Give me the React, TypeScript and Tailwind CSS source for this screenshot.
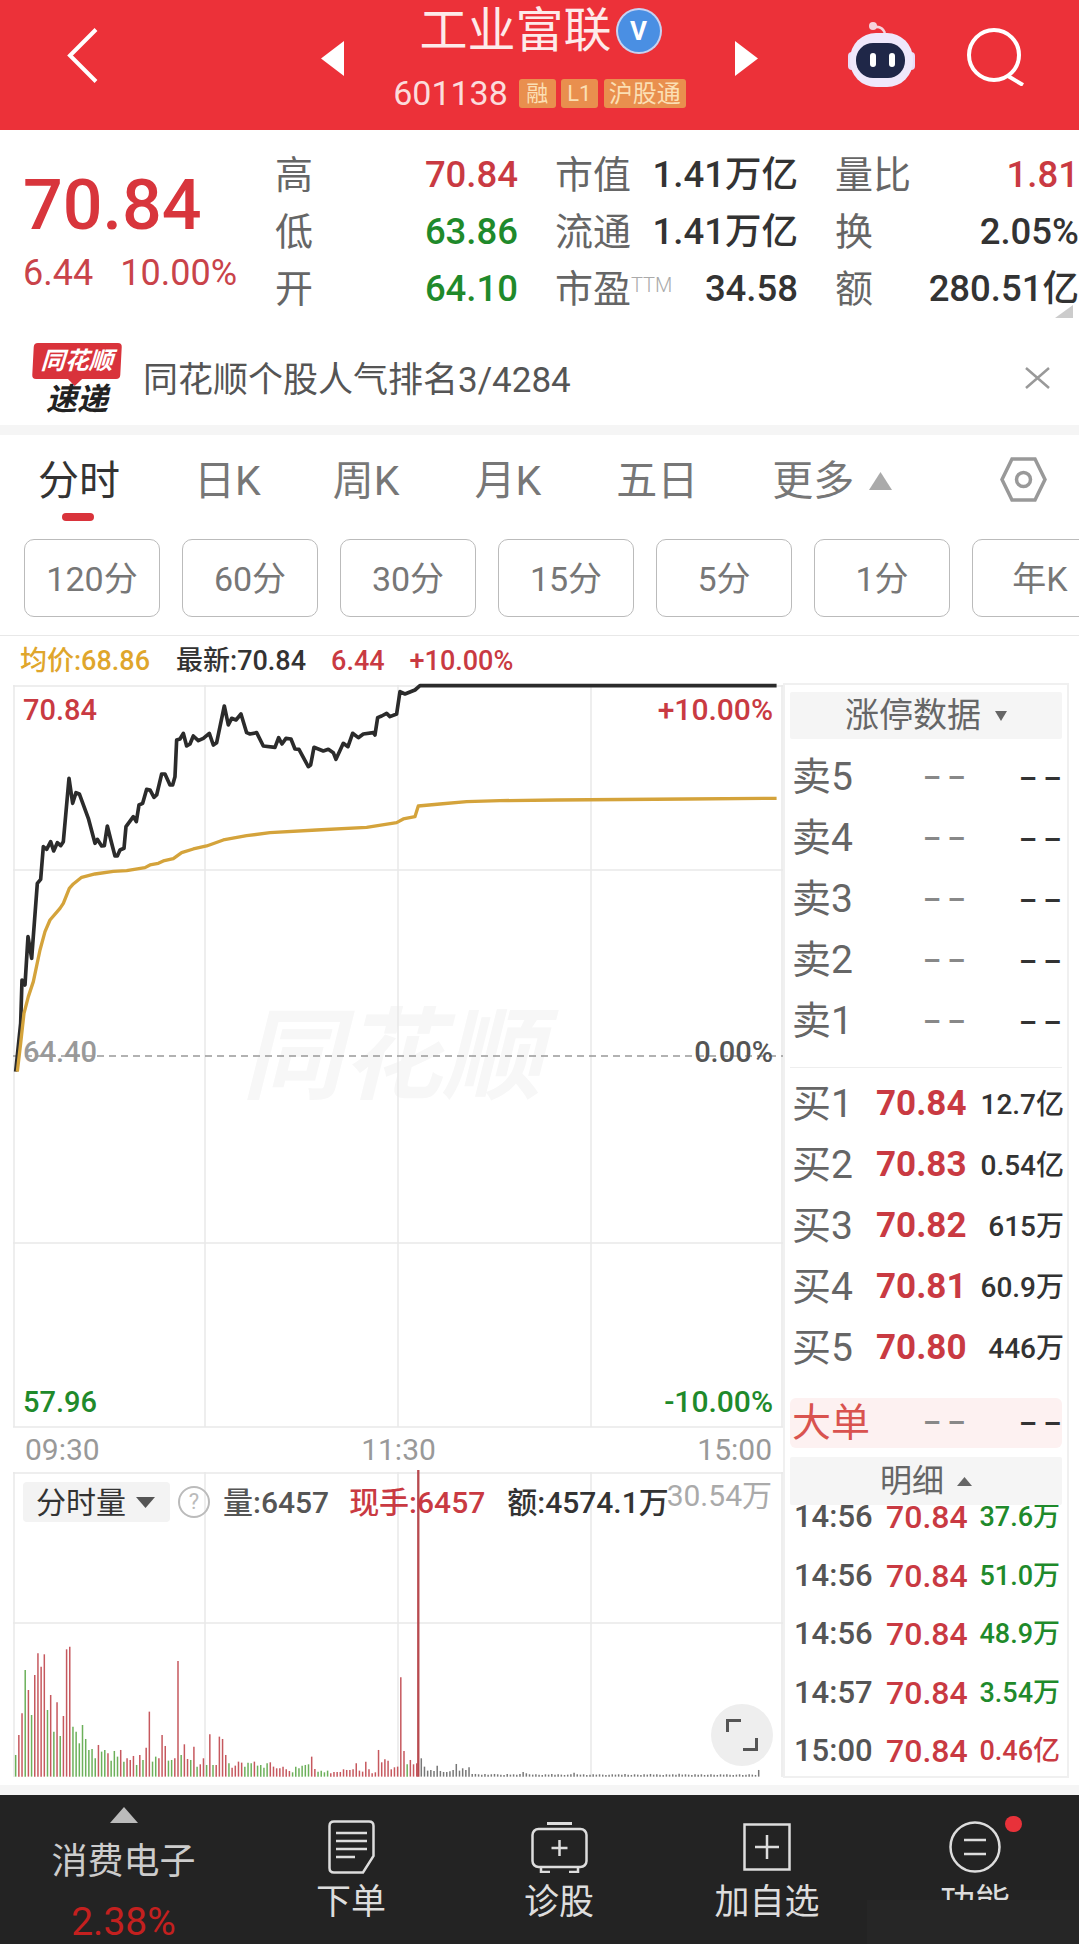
import type { ReactNode } from "react";

const RED = "text-[#c93a42]";

// positive = red bar, negative = green bar; value is the bar top in a 3x crop of the volume chart
const volTops = [
  -1005, 945, 880, -750, 810, -885, 765, 700, 740, 703, -870, 825, -935, 847, -948, 888, 688, 680, -920, -935, -970,
  -915, -957, -990, -987, -1015, 975, -995, -990, 1000, -1022, -993, -1010, 990, -1025, 1015, 1020, 1008, -1035, 1005,
  -1020, 983, 875, -1025, -1010, 1015, 945, 978, -1022, -1020, 1015, 723, -1005, 973, 1017, -1020, 980, -1040, 1033,
  1015, -1035, 943, -1035, 1035, 950, 957, 1005, -1030, 1043, 1037, 1025, 1028, -1040, -1028, -1030, 1025, -1037,
  -1035, -1043, -1030, 1027, 1040, 1045, 1045, 1040, 1048, 1053, -1057, -1040, -1045, -1037, -1035, -1033, 1010, 1047,
  -1055, -1052, -1057, -1052, 1060, 1056, 1056, 1056, 1048, 1050, 1050, 1048, 1030, 1052, 1055, 1025, 1048, 1060, 1057,
  990, 1027, 1018, 1022, 1048, 1042, 1040, 772, 993, -1033, 1020, 1033, 1030,
];
const grayTops = [
  1015, 1040, 1052, 1050, 1053, 1037, 1053, 1056, 1056, 1054, 1050, 1032, 1052, 1045, 1050, 1042, 1062, 1062, 1063,
  1064, 1062, 1064, 1063, 1062, 1063, 1064, 1065, 1062, 1064, 1063, 1064, 1062, 1056, 1060, 1063, 1064, 1063, 1064,
  1065, 1063, 1064, 1062, 1064, 1063, 1064, 1065, 1064, 1063, 1058, 1063, 1064, 1063, 1065, 1064, 1063, 1064, 1063,
  1064, 1065, 1064, 1063, 1064, 1063, 1064, 1062, 1064, 1065, 1063, 1064, 1065, 1063, 1064, 1062, 1064, 1063, 1064,
  1065, 1063, 1064, 1063, 1064, 1061, 1064, 1063, 1064, 1065, 1063, 1064, 1063, 1065, 1064, 1063, 1064, 1065, 1063,
  1064, 1063, 1064, 1065, 1064, 1063, 1065, 1064, 1063, 1064, 1065, 1050,
];

const priceLine =
  "M47 1205L62 1060L66 930L75 945L84 800L95 865L112 640L122 628L130 530L140 538L152 515L161 543L172 518L182 527L190 515L207 325L218 400L228 368L238 372L265 445L285 520L292 508L305 528L313 527L322 468L335 520L345 558L352 558L360 540L372 535L378 470L400 440L409 455L417 405L428 400L440 358L450 360L462 382L470 375L485 312L495 312L510 345L518 345L525 320L530 210L540 207L550 190L560 228L570 222L580 198L595 212L610 205L628 190L640 225L650 218L673 108L685 165L695 145L708 150L723 132L740 188L750 192L770 188L790 228L825 232L836 203L846 222L858 205L873 207L885 237L897 238L925 290L932 285L942 232L970 243L985 238L1000 248L1008 268L1030 220L1044 230L1058 190L1075 203L1090 192L1120 188L1125 195L1133 143L1145 138L1160 130L1170 140L1190 132L1200 65L1215 72L1245 60L1260 47L2330 47";
const avgLine =
  "M52 1205L62 1120L72 1030L85 980L100 935L120 840L135 785L150 750L180 715L190 700L208 655L220 642L245 622L285 612L340 604L380 602L435 593L450 585L475 580L490 573L520 566L545 548L580 537L620 528L670 510L740 497L810 488L950 480L1100 472L1190 458L1210 447L1245 440L1255 408L1320 402L1400 395L1500 392L1670 390L2060 387L2330 385";

function Caret({ up, className }: { up?: boolean; className: string }) {
  return (
    <svg viewBox="0 0 20 14" preserveAspectRatio="none" className={className}>
      <polygon points={up ? "10,0 20,14 0,14" : "0,0 20,0 10,14"} fill="currentColor" />
    </svg>
  );
}

function Dash({ dark }: { dark?: boolean }) {
  return (
    <span className={`relative top-[1px] text-[28px] font-bold leading-none ${dark ? "text-[#333]" : "text-[#888]"}`}>
      – –
    </span>
  );
}

function StatCell({ label, value, tone = "text-[#333]" }: { label: ReactNode; value: string; tone?: string }) {
  return (
    <div className="flex h-[57px] items-center justify-between whitespace-nowrap">
      <span className="text-[38px] text-[#666]">{label}</span>
      <span className={`text-[36.5px] font-medium ${tone}`}>{value}</span>
    </div>
  );
}

function SellRow({ label }: { label: string }) {
  return (
    <div className="flex h-[61px] items-center pl-[7px]">
      <span className="w-[131px] text-[39px] text-[#666]">{label}</span>
      <span className="w-[96px]">
        <Dash />
      </span>
      <Dash dark />
    </div>
  );
}

function BuyRow({ label, price, vol }: { label: string; price: string; vol: string }) {
  return (
    <div className="flex h-[61px] items-center pl-[7px] pr-[3px] whitespace-nowrap">
      <span className="w-[84px] text-[39px] text-[#666]">{label}</span>
      <span className={`text-[35px] font-bold ${RED}`}>{price}</span>
      <span className="ml-auto text-[28px] font-medium text-[#333]">{vol}</span>
    </div>
  );
}

function TickRow({ time, vol, tone }: { time: string; vol: string; tone: string }) {
  return (
    <div className="flex h-[58.5px] shrink-0 items-center pl-[9px] pr-[7px] whitespace-nowrap">
      <span className="w-[92px] text-[31px] font-medium text-[#555]">{time}</span>
      <span className={`text-[32px] font-medium ${RED}`}>70.84</span>
      <span className={`ml-auto text-[27px] font-medium ${tone}`}>{vol}</span>
    </div>
  );
}

function NavItem({ icon, label }: { icon: ReactNode; label: string }) {
  return (
    <div className="flex w-[208px] flex-col items-center pt-[24px]">
      <div className="flex h-[56px] items-center justify-center">{icon}</div>
      <div className="mt-[8px] flex h-[40px] items-center text-[35px] text-[#ddd]">{label}</div>
    </div>
  );
}

function PriceChart() {
  return (
    <div className="relative h-[742px] w-[770px]">
      <span className="absolute left-[229px] top-[322px] text-[100px] font-bold italic leading-none text-[#f7f7f7]">
        同花顺
      </span>
      <svg viewBox="13 685 770 742" className="absolute inset-0 h-full w-full overflow-visible">
        <g stroke="#e9e9e9" strokeWidth="1.5" fill="none">
          <path d="M14 685V1427M205 685V1427M398 685V1427M591 685V1427M782 685V1427" />
          <path d="M13 686H783M13 870H783M13 1243H783M13 1427H783" />
        </g>
        <path d="M13 1056H783" stroke="#999" strokeWidth="1.5" strokeDasharray="7 5" />
        <g transform="translate(0 670) scale(0.3333)" fill="none" strokeLinejoin="round">
          <path d={priceLine} stroke="#2b2b2b" strokeWidth="11" />
          <path d={avgLine} stroke="#d4a33b" strokeWidth="10" />
        </g>
      </svg>
      <span className={`absolute left-[10px] top-[10px] text-[29px] font-medium leading-[30px] ${RED}`}>70.84</span>
      <span className={`absolute right-[10px] top-[10px] text-[30px] font-medium leading-[30px] ${RED}`}>+10.00%</span>
      <span className="absolute left-[10px] top-[352px] text-[29px] font-medium leading-[30px] text-[#999]">64.40</span>
      <span className="absolute right-[10px] top-[352px] text-[29px] font-medium leading-[30px] text-[#555]">0.00%</span>
      <span className="absolute left-[10px] top-[702px] text-[29px] font-medium leading-[30px] text-[#1f8a2b]">57.96</span>
      <span className="absolute right-[10px] top-[702px] text-[30px] font-medium leading-[30px] text-[#1f8a2b]">-10.00%</span>
    </div>
  );
}

function VolumeChart() {
  return (
    <div className="relative h-[305px] w-[770px]">
      <svg viewBox="13 1472 770 305" className="absolute inset-0 h-full w-full overflow-visible">
        <g stroke="#e9e9e9" strokeWidth="1.5" fill="none">
          <path d="M14 1472V1777M205 1472V1777M398 1472V1777M591 1472V1777M782 1472V1777" />
          <path d="M13 1473H783M13 1623H783" />
        </g>
        <g transform="translate(0 1420) scale(0.3333)" strokeWidth="4.5">
          {volTops.map((top, i) => (
            <line
              key={i}
              x1={47 + i * 9.55}
              x2={47 + i * 9.55}
              y1={1070}
              y2={Math.abs(top)}
              stroke={top < 0 ? "#6cb05a" : "#c6585e"}
            />
          ))}
          {grayTops.map((top, i) => (
            <line key={i} x1={1264 + i * 9.55} x2={1264 + i * 9.55} y1={1070} y2={top} stroke="#777" />
          ))}
          <line x1={1255} x2={1255} y1={1070} y2={150} stroke="#b84a4f" strokeWidth="7" />
        </g>
      </svg>

      <div className="absolute left-[10px] top-[10px] flex h-[40px] items-center whitespace-nowrap">
        <div className="flex h-[40px] w-[147px] items-center rounded-[4px] bg-[#f3f3f3] pl-[13px] text-[30px] text-[#333]">
          分时量
          <Caret className="ml-[10px] h-[11px] w-[19px] text-[#555]" />
        </div>
        <div className="ml-[8px] flex h-[32px] w-[32px] items-center justify-center rounded-full border-2 border-[#bbb] text-[22px] leading-none text-[#bbb]">
          ?
        </div>
        <span className="ml-[13px] text-[30px] font-medium text-[#555]">量:6457</span>
        <span className={`ml-[20px] text-[30px] font-medium ${RED}`}>现手:6457</span>
        <span className="ml-[22px] text-[30px] font-medium text-[#333]">额:4574.1万</span>
      </div>
      <span className="absolute right-[11px] top-[4px] text-[30px] leading-[40px] text-[#aaa]">30.54万</span>

      <div className="absolute bottom-[11px] left-[698px] flex h-[62px] w-[62px] items-center justify-center rounded-full bg-[#eee]">
        <svg viewBox="0 0 32 32" className="h-[32px] w-[32px]" fill="none" stroke="#555" strokeWidth="3">
          <path d="M1.5 13V1.5H15M30.5 19V30.5H17" />
        </svg>
      </div>
    </div>
  );
}

export default function App() {
  return (
    <div className="relative h-[1944px] w-[1079px] overflow-hidden bg-white [font-family:Roboto,'Noto_Sans_CJK_SC',sans-serif]">
      {/* top bar */}
      <header className="flex h-[130px] items-start bg-[#ec3139] text-white">
        <svg viewBox="0 0 31 55" className="ml-[67px] mt-[28px] h-[55px] w-[31px]" fill="none" stroke="#fff" strokeWidth="4">
          <path d="M29 1.5L3 27.5L29 53.5" />
        </svg>
        <svg viewBox="0 0 23 35" className="ml-[223px] mt-[41px] h-[35px] w-[23px]">
          <polygon points="23,0 23,35 0,17.5" fill="#fff" />
        </svg>
        <div className="flex w-[391px] flex-col items-center">
          <div className="mt-[6px] flex h-[50px] items-center">
            <span className="text-[48px] leading-none text-[#fdeaea]">工业富联</span>
            <span className="ml-[6px] flex h-[42px] w-[42px] items-center justify-center rounded-full bg-[#4a8fe3] text-[26px] font-bold leading-none text-white ring-2 ring-[#c7d2f2]">
              V
            </span>
          </div>
          <div className="mt-[23px] flex h-[29px] items-center">
            <span className="text-[34px] text-[#fbdcdc]">601138</span>
            <span className="ml-[11px] flex h-[29px] w-[37px] items-center justify-center rounded-[3px] bg-[#e98f4e] text-[22px] text-[#fbdfb4]">融</span>
            <span className="ml-[5px] flex h-[29px] w-[37px] items-center justify-center rounded-[3px] bg-[#e98f4e] text-[22px] text-[#fbdfb4]">L1</span>
            <span className="ml-[6px] flex h-[29px] w-[82px] items-center justify-center rounded-[3px] bg-[#e98f4e] text-[24px] text-[#fbdfb4]">沪股通</span>
          </div>
        </div>
        <svg viewBox="0 0 23 35" className="mt-[41px] h-[35px] w-[23px]">
          <polygon points="0,0 0,35 23,17.5" fill="#fff" />
        </svg>
        <svg viewBox="0 0 71 66" className="ml-[90px] mt-[22px] h-[66px] w-[71px]">
          <circle cx="25" cy="4" r="4" fill="#f6d3dc" />
          <path d="M27 5Q34 4 37 11" fill="none" stroke="#f6d3dc" strokeWidth="2.5" />
          <rect x="0" y="30" width="8" height="18" rx="4" fill="#e9dcf7" />
          <rect x="59" y="30" width="8" height="18" rx="4" fill="#e9dcf7" />
          <rect x="2" y="11" width="63" height="54" rx="26" fill="#efe8fb" />
          <rect x="8" y="21" width="49" height="35" rx="17" fill="#1f2748" />
          <rect x="22" y="31" width="6" height="14" rx="3" fill="#fff" />
          <rect x="41" y="31" width="6" height="14" rx="3" fill="#fff" />
        </svg>
        <svg viewBox="0 0 58 58" className="ml-[48px] mt-[28px] h-[58px] w-[58px]" fill="none" stroke="#fff" strokeWidth="4">
          <circle cx="27" cy="27" r="25" />
          <path d="M41 48L56 57" />
        </svg>
      </header>

      {/* quote summary */}
      <section className="flex h-[201px]">
        <div className="w-[278px] pl-[23px] pt-[33px]">
          <div className="text-[70px] font-medium leading-[84px] text-[#d8353c]">70.84</div>
          <div className="mt-[6px] flex gap-[27px] text-[36px] leading-[40px] text-[#c9434a]">
            <span>6.44</span>
            <span>10.00%</span>
          </div>
        </div>
        <div className="mt-[17px] grid h-[171px] grid-cols-[243px_243px_244px] gap-x-[37px]">
          <StatCell label="高" value="70.84" tone={RED} />
          <StatCell label="市值" value="1.41万亿" />
          <StatCell label="量比" value="1.81" tone={RED} />
          <StatCell label="低" value="63.86" tone="text-[#1f8a2b]" />
          <StatCell label="流通" value="1.41万亿" />
          <StatCell label="换" value="2.05%" />
          <StatCell label="开" value="64.10" tone="text-[#1f8a2b]" />
          <StatCell
            label={
              <>
                市盈<sup className="text-[20px] font-light text-[#aaa]">TTM</sup>
              </>
            }
            value="34.58"
          />
          <StatCell label="额" value="280.51亿" />
        </div>
      </section>
      <svg viewBox="0 0 18 13" className="absolute left-[1055px] top-[305px] h-[13px] w-[18px]">
        <polygon points="18,0 18,13 0,13" fill="#ccc" />
      </svg>

      {/* news strip */}
      <section className="flex h-[94px] items-center">
        <div className="ml-[33px] flex w-[88px] flex-col items-center">
          <div className="relative mt-[2px] flex h-[36px] w-[88px] -skew-x-3 items-center justify-center rounded-[4px] bg-[#d9333b] text-[24px] font-bold italic leading-none text-white">
            同花顺
            <span className="absolute -bottom-[5px] left-[38px] h-[10px] w-[10px] rotate-45 bg-[#d9333b]" />
          </div>
          <div className="mt-[5px] text-[31px] font-bold italic leading-[32px] text-[#222]">速递</div>
        </div>
        <span className="relative top-[2px] ml-[22px] text-[35px] leading-none text-[#555]">同花顺个股人气排名3/4284</span>
        <svg viewBox="0 0 25 22" className="ml-auto mr-[29px] h-[22px] w-[25px]" fill="none" stroke="#999" strokeWidth="2.5">
          <path d="M1 1L24 21M24 1L1 21" />
        </svg>
      </section>
      <div className="h-[10px] bg-[#f5f5f5]" />

      {/* period tabs */}
      <nav className="relative flex h-[90px] items-center gap-[75px] pl-[38px] pt-[2px] text-[41px] leading-none text-[#777]">
        <span className="text-[#333]">分时</span>
        <span className="-ml-[1px]">日K</span>
        <span className="-ml-[3px]">周K</span>
        <span>月K</span>
        <span>五日</span>
        <span className="-ml-[1px] flex items-center">
          更多
          <Caret up className="ml-[15px] h-[18px] w-[23px] text-[#aaa]" />
        </span>
        <svg viewBox="0 0 47 45" className="absolute left-[1000px] top-[22px] h-[45px] w-[47px]" fill="none" stroke="#999" strokeWidth="3.5">
          <polygon points="12,2 35,2 45,22.5 35,43 12,43 2,22.5" />
          <circle cx="23.5" cy="22.5" r="7" />
        </svg>
        <span className="absolute bottom-[4px] left-[62px] h-[8px] w-[32px] rounded-full bg-[#d9333b]" />
      </nav>

      <div className="mt-[14px] flex gap-[22px] pl-[24px]">
        {["120分", "60分", "30分", "15分", "5分", "1分", "年K"].map((label) => (
          <div
            key={label}
            className="flex h-[78px] w-[136px] shrink-0 items-center justify-center rounded-[10px] border border-[#bbb] pt-[2px] text-[34px] text-[#777]"
          >
            {label}
          </div>
        ))}
      </div>
      <div className="mt-[18px] h-[1px] bg-[#e8e8e8]" />

      {/* chart legend */}
      <div className="flex h-[47px] items-center whitespace-nowrap pl-[20px] pt-[4px] text-[27px] font-medium">
        <span className="text-[#dfa62c]">均价:68.86</span>
        <span className="ml-[26px] text-[#333]">最新:70.84</span>
        <span className={`ml-[25px] ${RED}`}>6.44</span>
        <span className={`ml-[25px] ${RED}`}>+10.00%</span>
      </div>

      {/* chart and order book */}
      <div className="flex pl-[13px]">
        <div className="mt-[2px] w-[770px]">
          <PriceChart />
          <div className="flex h-[45px] items-center justify-between pl-[12px] pr-[11px] text-[30px] text-[#999]">
            <span>09:30</span>
            <span>11:30</span>
            <span>15:00</span>
          </div>
          <VolumeChart />
        </div>

        <aside className="flex h-[1095px] w-[286px] flex-col border-2 border-[#f0f0f0]">
          <div className="mx-[5px] mt-[7px] flex h-[47px] items-center justify-center rounded-[2px] bg-[#f5f5f5] text-[34px] text-[#666]">
            涨停数据
            <Caret className="ml-[14px] h-[10px] w-[12px] text-[#666]" />
          </div>
          <div className="mt-[8px]">
            {["卖5", "卖4", "卖3", "卖2", "卖1"].map((label) => (
              <SellRow key={label} label={label} />
            ))}
          </div>
          <div className="mx-[5px] mt-[15px] h-[1px] bg-[#eee]" />
          <div className="mt-[6px]">
            <BuyRow label="买1" price="70.84" vol="12.7亿" />
            <BuyRow label="买2" price="70.83" vol="0.54亿" />
            <BuyRow label="买3" price="70.82" vol="615万" />
            <BuyRow label="买4" price="70.81" vol="60.9万" />
            <BuyRow label="买5" price="70.80" vol="446万" />
          </div>
          <div className="mx-[5px] mt-[19px] flex h-[50px] items-center rounded-[6px] bg-[#fdf1f1] pl-[2px]">
            <span className="w-[131px] text-[39px] text-[#d9534f]">大单</span>
            <span className="w-[96px]">
              <Dash />
            </span>
            <Dash dark />
          </div>
          <div className="mx-[5px] mt-[9px] flex h-[48px] shrink-0 items-center justify-center rounded-[2px] bg-[#f5f5f5] text-[32px] text-[#666]">
            明细
            <Caret up className="ml-[13px] h-[9px] w-[15px] text-[#666]" />
          </div>
          <div className="flex-1 overflow-hidden">
            <div className="-mt-[17px]">
              <TickRow time="14:56" vol="37.6万" tone="text-[#1f8a2b]" />
              <TickRow time="14:56" vol="51.0万" tone="text-[#1f8a2b]" />
              <TickRow time="14:56" vol="48.9万" tone="text-[#1f8a2b]" />
              <TickRow time="14:57" vol="3.54万" tone="text-[#1f8a2b]" />
              <TickRow time="15:00" vol="0.46亿" tone={RED} />
            </div>
          </div>
        </aside>
      </div>

      {/* bottom bar */}
      <footer className="absolute bottom-0 left-0 h-[159px] w-full bg-[#f5f5f5] pt-[10px]">
        <div className="flex h-[149px] bg-[#232323]">
          <div className="flex w-[247px] flex-col items-center pt-[12px]">
            <Caret up className="h-[16px] w-[28px] text-[#bbb]" />
            <div className="mt-[18px] text-[36px] leading-[42px] text-[#ccc]">消费电子</div>
            <div className="mt-[19px] text-[39px] leading-[40px] text-[#c4201f]">2.38%</div>
          </div>
          <NavItem
            label="下单"
            icon={
              <svg viewBox="0 0 47 54" className="h-[54px] w-[47px]" fill="none" stroke="#ddd" strokeWidth="2.5">
                <path d="M6 1.5H41Q45.5 1.5 45.5 6V36L35 52.5H6Q1.5 52.5 1.5 48V6Q1.5 1.5 6 1.5Z" />
                <path d="M8 13H39M8 21H39M8 29H39M8 37H27" />
              </svg>
            }
          />
          <NavItem
            label="诊股"
            icon={
              <svg viewBox="0 0 57 51" className="h-[51px] w-[57px]" fill="none" stroke="#ddd" strokeWidth="2.5">
                <path d="M16 1.5H41" strokeWidth="3" />
                <rect x="1.5" y="7" width="54" height="38" rx="6" />
                <path d="M10 45V50H19M47 45V50H38" />
                <path d="M28.5 18V34M20.5 26H36.5" />
              </svg>
            }
          />
          <NavItem
            label="加自选"
            icon={
              <svg viewBox="0 0 48 48" className="h-[48px] w-[48px]" fill="none" stroke="#ddd" strokeWidth="2.5">
                <rect x="1.5" y="1.5" width="45" height="45" />
                <path d="M24 12V36M12 24H36" />
              </svg>
            }
          />
          <NavItem
            label="功能"
            icon={
              <svg viewBox="0 0 52 52" className="h-[52px] w-[52px]" fill="none" stroke="#ddd" strokeWidth="2.5">
                <circle cx="26" cy="26" r="24.5" />
                <path d="M15 19H37M15 33H37" />
              </svg>
            }
          />
        </div>
        <span className="absolute left-[1005px] top-[31px] h-[16px] w-[17px] rounded-full bg-[#e8323a]" />
        <div className="absolute left-[867px] top-[115px] h-[44px] w-[212px] bg-[#262626]" />
      </footer>
    </div>
  );
}
